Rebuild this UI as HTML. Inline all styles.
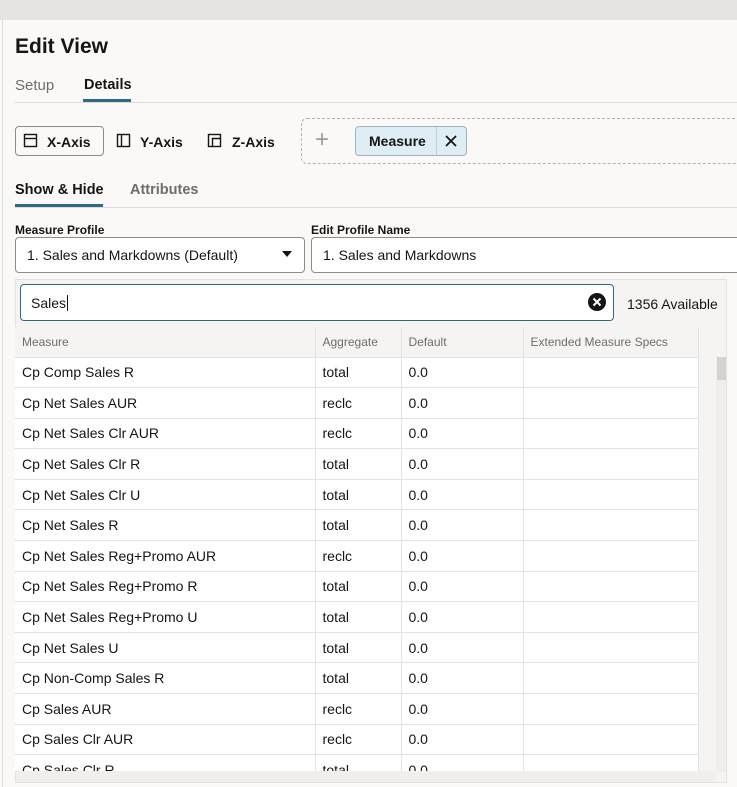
<!DOCTYPE html>
<html><head><style>
*{box-sizing:border-box;margin:0;padding:0}
body{width:737px;height:787px;overflow:hidden;background:#faf9f7;font-family:"Liberation Sans",sans-serif;color:#161513;position:relative}
.abs{position:absolute}
.top{left:0;top:0;width:737px;height:20px;background:#e6e4e1}
.lb{left:2px;top:20px;width:1px;height:767px;background:#e0dedb}
h1{position:absolute;left:15px;top:35px;font-size:21px;font-weight:bold}
.tab{position:absolute;font-size:15px}
.sel{position:absolute;height:36px;border:1px solid #8f8c88;border-radius:4px;background:#fff;font-size:14px;padding:9px 11px}
table{position:absolute;left:15px;top:327px;border-collapse:collapse;background:#fff}
td{height:30.6px;border:1px solid #e4e2df;border-top:none;border-left:none;font-size:14px;padding:0 7px;white-space:nowrap}
th{height:30px;font-weight:normal;font-size:12px;color:#6f6c69;text-align:left;padding:0 7px;background:#f5f4f2;border-right:1px solid #e4e2df;border-bottom:1px solid #e4e2df}
</style></head><body>
<div class="abs top"></div>
<div class="abs lb"></div>
<h1>Edit View</h1>
<div class="tab" style="left:15px;top:77px;color:#6f6c69">Setup</div>
<div class="tab" style="left:84px;top:77px;font-weight:bold;font-size:14.5px">Details</div>
<div class="abs" style="left:83px;top:99px;width:48px;height:3px;background:#2d6a84"></div>
<div class="abs" style="left:15px;top:102px;width:722px;height:1px;background:#dddbd8"></div>

<div class="abs" style="left:15px;top:126px;width:89px;height:30px;border:1px solid #8f8c88;border-radius:4px;background:#faf9f7"></div>
<svg class="abs" style="left:23px;top:133px" width="16" height="16"><rect x="1.5" y="1.5" width="12" height="12" fill="none" stroke="#161513" stroke-width="1.4"/><line x1="1.5" y1="5.5" x2="13.5" y2="5.5" stroke="#161513" stroke-width="1.4"/></svg>
<div class="tab" style="left:47px;top:134px;font-size:14px;font-weight:bold">X-Axis</div>
<svg class="abs" style="left:116px;top:133px" width="16" height="16"><rect x="1.5" y="1.5" width="12" height="12" fill="none" stroke="#161513" stroke-width="1.4"/><line x1="5.5" y1="1.5" x2="5.5" y2="13.5" stroke="#161513" stroke-width="1.4"/></svg>
<div class="tab" style="left:140px;top:134px;font-size:14px;font-weight:bold">Y-Axis</div>
<svg class="abs" style="left:207px;top:133px" width="16" height="16"><rect x="1.5" y="1.5" width="12" height="12" fill="none" stroke="#161513" stroke-width="1.4"/><polyline points="5.5,13.5 5.5,5.5 13.5,5.5" fill="none" stroke="#161513" stroke-width="1.4"/></svg>
<div class="tab" style="left:232px;top:134px;font-size:14px;font-weight:bold">Z-Axis</div>
<div class="abs" style="left:301px;top:118px;width:450px;height:46px;border:1px dashed #b5b2ae;border-radius:6px"></div>
<div class="abs" style="left:315px;top:129px;font-size:24px;color:#9e9b97;line-height:22px">+</div>
<div class="abs" style="left:355px;top:126px;width:112px;height:30px;border:1px solid #9fb3be;border-radius:4px;background:#dfeef5"></div>
<div class="abs" style="left:436px;top:127px;width:1px;height:28px;background:#c0ced6"></div>
<div class="tab" style="left:369px;top:133px;font-size:14px;font-weight:bold">Measure</div>
<svg class="abs" style="left:444px;top:134px" width="14" height="14"><path d="M2 2L12 12M12 2L2 12" stroke="#161513" stroke-width="1.8"/></svg>

<div class="tab" style="left:15px;top:182px;font-weight:bold;font-size:14.5px">Show &amp; Hide</div>
<div class="tab" style="left:130px;top:182px;color:#6f6c69;font-weight:bold;font-size:14.5px">Attributes</div>
<div class="abs" style="left:15px;top:204px;width:88px;height:3px;background:#2d6a84"></div>
<div class="abs" style="left:15px;top:207px;width:722px;height:1px;background:#dddbd8"></div>

<div class="abs" style="left:15px;top:223px;font-size:12px;font-weight:bold">Measure Profile</div>
<div class="abs" style="left:311px;top:223px;font-size:12px;font-weight:bold">Edit Profile Name</div>
<div class="sel" style="left:15px;top:237px;width:290px">1. Sales and Markdowns (Default)</div>
<svg class="abs" style="left:282px;top:251px" width="10" height="7"><path d="M0 0H10L5 6Z" fill="#161513"/></svg>
<div class="sel" style="left:311px;top:237px;width:440px">1. Sales and Markdowns</div>

<div class="abs" style="left:15px;top:279px;width:712px;height:504px;background:#f5f4f2;border:1px solid #e4e2df"></div>
<div class="abs" style="left:20px;top:284px;width:594px;height:37px;border:1px solid #2d6a84;border-radius:4px;background:#fff;font-size:14px;padding:10px 10px">Sales<span style="border-left:1px solid #161513;margin-left:1px"></span></div>
<svg class="abs" style="left:587px;top:292px" width="20" height="20"><circle cx="10" cy="10" r="9" fill="#161513"/><path d="M6.5 6.5L13.5 13.5M13.5 6.5L6.5 13.5" stroke="#fff" stroke-width="2"/></svg>
<div class="abs" style="left:627px;top:296px;font-size:14px">1356 Available</div>

<div class="abs" style="left:716px;top:357px;width:10px;height:415px;background:#efeeec"></div>
<div class="abs" style="left:717px;top:357px;width:9px;height:23px;background:#d4d3d1"></div>

<div class="abs" style="left:15px;top:327px;width:700px;height:444px;overflow:hidden">
<table style="left:0;top:0">
<tr><th style="width:300px">Measure</th><th style="width:86px">Aggregate</th><th style="width:122px">Default</th><th style="width:175px">Extended Measure Specs</th></tr>
<tr><td>Cp Comp Sales R</td><td>total</td><td>0.0</td><td></td></tr>
<tr><td>Cp Net Sales AUR</td><td>reclc</td><td>0.0</td><td></td></tr>
<tr><td>Cp Net Sales Clr AUR</td><td>reclc</td><td>0.0</td><td></td></tr>
<tr><td>Cp Net Sales Clr R</td><td>total</td><td>0.0</td><td></td></tr>
<tr><td>Cp Net Sales Clr U</td><td>total</td><td>0.0</td><td></td></tr>
<tr><td>Cp Net Sales R</td><td>total</td><td>0.0</td><td></td></tr>
<tr><td>Cp Net Sales Reg+Promo AUR</td><td>reclc</td><td>0.0</td><td></td></tr>
<tr><td>Cp Net Sales Reg+Promo R</td><td>total</td><td>0.0</td><td></td></tr>
<tr><td>Cp Net Sales Reg+Promo U</td><td>total</td><td>0.0</td><td></td></tr>
<tr><td>Cp Net Sales U</td><td>total</td><td>0.0</td><td></td></tr>
<tr><td>Cp Non-Comp Sales R</td><td>total</td><td>0.0</td><td></td></tr>
<tr><td>Cp Sales AUR</td><td>reclc</td><td>0.0</td><td></td></tr>
<tr><td>Cp Sales Clr AUR</td><td>reclc</td><td>0.0</td><td></td></tr>
<tr><td>Cp Sales Clr R</td><td>total</td><td>0.0</td><td></td></tr>
</table>
</div>
<div class="abs" style="left:16px;top:771px;width:700px;height:11px;background:#f0efed"></div>
</body></html>
